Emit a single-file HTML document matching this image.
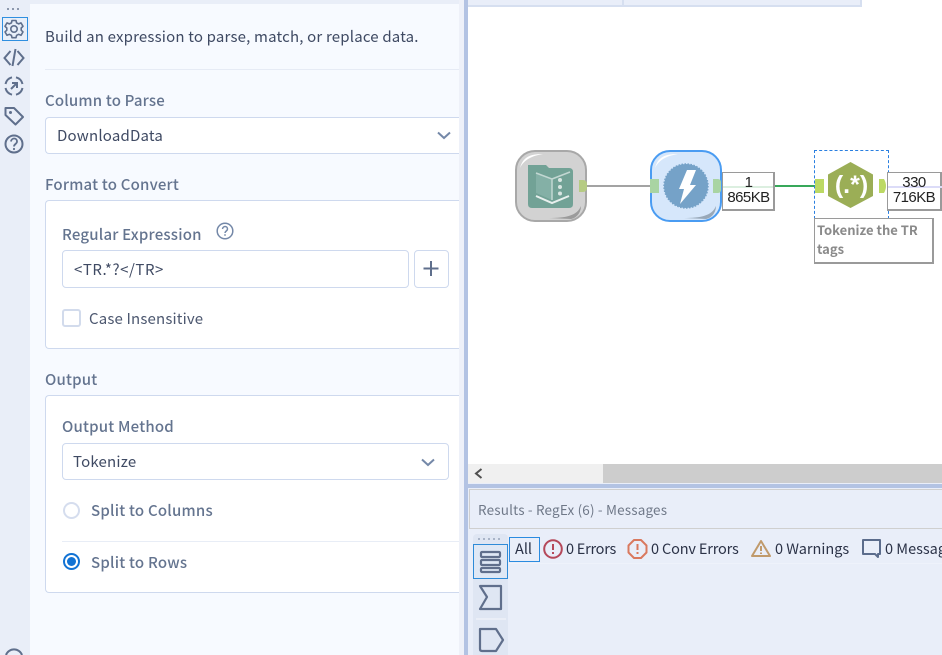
<!DOCTYPE html>
<html>
<head>
<meta charset="utf-8">
<style>
html,body{margin:0;padding:0;width:942px;height:655px;overflow:hidden;background:#fff}
body{position:relative;font-family:"Noto Sans CJK JP","Liberation Sans",sans-serif;}
.a{position:absolute;box-sizing:border-box}
.t{position:absolute;white-space:nowrap;line-height:20px;font-size:15px;color:#3f4a63}
.l{color:#64748f;font-weight:500}
.box{position:absolute;box-sizing:border-box;background:#fff;border:1px solid #ced9ee;border-radius:4px}
.m{position:absolute;white-space:nowrap;font-family:"Liberation Sans",sans-serif;font-size:15px;letter-spacing:-.55px;line-height:16px;color:#222;}
.n{position:absolute;white-space:nowrap;font-size:14.5px;line-height:18px;color:#2b3247;}
svg{position:absolute;overflow:visible}
</style>
</head>
<body>
<!-- left rail / panel -->
<div class="a" style="left:0;top:0;width:463px;height:655px;background:#f7faff"></div>
<div class="a" style="left:0;top:0;width:30px;height:655px;background:#e9eef8"></div>
<div class="a" style="left:0;top:0;width:463px;height:4px;background:#e9eef8"></div>
<div class="a" style="left:459px;top:0;width:5px;height:655px;background:#eef1f9"></div>
<div class="a" style="left:464px;top:0;width:4px;height:655px;background:#b3c3e3"></div>

<!-- rail dots -->
<svg style="left:0;top:0" width="30" height="14"><g fill="#8d98ad"><rect x="7" y="8" width="2" height="2"/><rect x="12" y="8" width="2" height="2"/><rect x="17" y="8" width="2" height="2"/></g></svg>
<div class="a" style="left:2px;top:17px;width:26px;height:24px;border:1px solid #2f8fe0;background:#e8eff9"></div>
<svg style="left:0;top:0" width="30" height="160" fill="none" stroke="#5f6f8c" stroke-width="2">
<g transform="translate(14,29)"><circle r="3.2" stroke-width="1.6"/><path stroke-width="1.6" stroke-linejoin="round" d="M-2-8.5h4l.6 2.4 2.1 1 2.3-1 2 3.4-1.8 1.7v2.2l1.8 1.7-2 3.4-2.3-1-2.1 1-.6 2.400h-4l-.6-2.400-2.100-1-2.300 1-2-3.400 1.800-1.700v-2.200l-1.800-1.700 2-3.400 2.300 1 2.100-1z"/></g>
<path d="M10.500 51 L4.500 58 L10.500 65 M17.500 51 L23.500 58 L17.500 65 M15.500 49 L12.500 66"/>
<g transform="translate(14,86)"><path d="M-8.500-2A9 9 0 0 1-2-8.700M2-8.700A9 9 0 0 1 8.500-2M8.500 2A9 9 0 0 1 2 8.700M-2 8.700A9 9 0 0 1-8.500 2"/><path d="M-3 3L3-3M-2-3H3V2"/></g>
<path stroke-linejoin="round" d="M5.500 108h8.500l9 9-7.500 7.500-10-9.500z"/><circle cx="10.500" cy="112.500" r="1.500" fill="#5f6f8c" stroke="none"/>
<circle cx="14" cy="144" r="8.500"/><path stroke-width="1.800" d="M11 141.500c.5-4 6-4 6 0 0 2.500-3 2.500-3 5"/><circle cx="14" cy="149" r="1.100" fill="#5f6f8c" stroke="none"/>
<path d="M6 655A8.500 8.500 0 0 1 22 655"/>
</svg>

<!-- panel content -->
<div class="t" style="left:45px;top:27px;letter-spacing:.18px">Build an expression to parse, match, or replace data.</div>
<div class="a" style="left:45px;top:69px;width:414px;height:1px;background:#e6ebf5"></div>

<div class="t l" style="left:45px;top:91px;letter-spacing:.18px">Column to Parse</div>
<div class="box" style="left:45px;top:117px;width:414px;height:37px;border-right:none;border-radius:4px 0 0 4px"></div>
<div class="t" style="left:57px;top:126px;letter-spacing:.2px">DownloadData</div>
<svg style="left:437px;top:131px" width="14" height="9" fill="none" stroke="#7488a8" stroke-width="2"><path d="M1 1.500L7 7l6-5.500"/></svg>

<div class="t l" style="left:45px;top:175px;letter-spacing:.2px">Format to Convert</div>
<div class="box" style="left:45px;top:200px;width:414px;height:149px;border-right:none;border-radius:4px 0 0 4px"></div>
<div class="t l" style="left:62px;top:225px;letter-spacing:.2px">Regular Expression</div>
<svg style="left:216px;top:222px" width="18" height="18" fill="none" stroke="#7488a8" stroke-width="1.500"><circle cx="9" cy="9" r="7.800"/><path d="M6.500 7c.3-3.300 5-3.300 5 0 0 2-2.500 2-2.500 4"/><circle cx="9" cy="13" r=".9" fill="#7488a8" stroke="none"/></svg>
<div class="box" style="left:62px;top:250px;width:347px;height:38px"></div>
<div class="t" style="left:74px;top:260px;letter-spacing:.55px">&lt;TR.*?&lt;/TR&gt;</div>
<div class="box" style="left:414px;top:250px;width:35px;height:38px"></div>
<svg style="left:423px;top:260px" width="18" height="18" stroke="#5f6f8c" stroke-width="2"><path d="M8 1v15M.5 8.500h15"/></svg>
<div class="a" style="left:62px;top:309px;width:19px;height:18px;border:2px solid #d2dbec;border-radius:3px;background:#fff"></div>
<div class="t" style="left:89px;top:309px;letter-spacing:.16px;color:#4d5870">Case Insensitive</div>

<div class="t l" style="left:45px;top:370px;letter-spacing:.2px">Output</div>
<div class="box" style="left:45px;top:395px;width:414px;height:198px;border-right:none;border-radius:4px 0 0 4px"></div>
<div class="t l" style="left:62px;top:417px;letter-spacing:.2px">Output Method</div>
<div class="box" style="left:62px;top:443px;width:387px;height:37px"></div>
<div class="t" style="left:73px;top:452px;letter-spacing:.2px">Tokenize</div>
<svg style="left:421px;top:458px" width="14" height="9" fill="none" stroke="#7488a8" stroke-width="2"><path d="M1 1.500L7 7l6-5.500"/></svg>
<div class="a" style="left:63px;top:502px;width:17px;height:17px;border:2px solid #d5ddee;border-radius:50%;background:#fff"></div>
<div class="t l" style="left:91px;top:501px;letter-spacing:.22px">Split to Columns</div>
<div class="a" style="left:62px;top:541px;width:397px;height:1px;background:#e8edf6"></div>
<div class="a" style="left:63px;top:553px;width:17px;height:17px;border:2px solid #1273d4;border-radius:50%;background:#fff"></div>
<div class="a" style="left:67px;top:557px;width:9px;height:9px;border-radius:50%;background:#1273d4"></div>
<div class="t l" style="left:91px;top:553px;letter-spacing:.22px">Split to Rows</div>

<!-- canvas top bar -->
<div class="a" style="left:468px;top:0;width:394px;height:7px;background:#e9eef9;border-bottom:2px solid #d6dff0;border-right:2px solid #d6dff0"></div>
<div class="a" style="left:622px;top:0;width:2px;height:6px;background:#d6dff0"></div>

<!-- connections -->
<svg style="left:0;top:0" width="942" height="300">
<path d="M587 186H651" stroke="#a3a3a3" stroke-width="2"/>
<path d="M722 186H772" stroke="#dcefe0" stroke-width="2"/>
<path d="M775 186H816" stroke="#38a85a" stroke-width="2"/>
<path d="M887 186H937" stroke="#d8d8f5" stroke-width="2"/>
<path d="M937 186H942" stroke="#4a4ad0" stroke-width="2"/>
</svg>

<!-- input tool -->
<div class="a" style="left:515px;top:150px;width:72px;height:72px;border-radius:20px;background:#d2d2d2;border:2px solid #a8a8a8"></div>
<svg style="left:515px;top:150px" width="72" height="72">
<path d="M5 18C8 7 15 4 28 4 16 6 9 10 5 18z" fill="#fff"/>
<path d="M34 68C50 68 62 66 66 56 66 62 62 68 56 69z" fill="#9b9b9b"/>
<path d="M13 19V15H31L34 18H54Q58 18 58 22V54Q58 58 54 58H17Q13 58 13 54z" fill="#72a296"/>
<path d="M21 23L37 29V50L21 43z" fill="#84b0a6"/>
<path d="M21 23L37 29V50M37 29L55 22" fill="none" stroke="#c2d7d2" stroke-width="1.500"/>
<path d="M21 46L37 53 54 46" fill="none" stroke="#e8f0ee" stroke-width="2"/>
<circle cx="45" cy="30" r="2" fill="#d8e6e2"/><circle cx="45" cy="37" r="2" fill="#d8e6e2"/><circle cx="45" cy="43.500" r="2" fill="#d8e6e2"/>
</svg>
<div class="a" style="left:579px;top:180px;width:8px;height:12px;background:#b6cb83;border-radius:0 4px 4px 0"></div>

<!-- download tool -->
<div class="a" style="left:650px;top:150px;width:72px;height:72px;border-radius:20px;background:#d6e7fb;border:2px solid #4a9cf2"></div>
<svg style="left:650px;top:150px" width="72" height="72">
<path d="M5 18C8 7 15 4 28 4 16 6 9 10 5 18z" fill="#fff"/>
<path d="M34 68C50 68 62 66 66 56 66 62 62 68 56 69z" fill="#98a8b8"/>
<circle cx="36" cy="36" r="22" fill="#75a2c8" stroke="#75a2c8" stroke-width="1.500" stroke-dasharray="1.500 1.500"/>
<path d="M37 20H46L40 35H46L30 54 34 39H29z" fill="#fff"/>
</svg>
<div class="a" style="left:650px;top:179px;width:9px;height:14px;background:#a9d4a3"></div>
<div class="a" style="left:713px;top:179px;width:8px;height:14px;background:#a9d4a3;border-radius:0 3px 3px 0"></div>

<!-- browse label 1 -->
<div class="a" style="left:722px;top:172px;width:53px;height:39px;background:#fff;border:1px solid #9a9a9a;border-width:1px 2px 2px 1px"></div>
<div class="a" style="left:723px;top:186px;width:50px;height:2px;background:#dcefe0"></div>
<div class="m" style="left:722px;width:53px;text-align:center;top:175px">1</div>
<div class="m" style="left:722px;width:53px;text-align:center;top:190px">865KB</div>

<!-- regex tool -->
<div class="a" style="left:814px;top:150px;width:75px;height:69px;border:1px dashed #2a7fe0;border-bottom:none"></div>
<svg style="left:814px;top:150px" width="76" height="70">
<path d="M36.500 12L59 24.500V46L36.500 58 14 46V24.500z" fill="#9bae56"/>
<path d="M1 29H10V43H1z" fill="#bcd964"/>
<path d="M65 29H70Q74 36 70 43H65z" fill="#bcd964"/>
</svg>
<div class="a" style="left:820px;top:170px;width:63px;text-align:center;font:700 25px/30px 'Liberation Sans',sans-serif;color:#fff">(.*)</div>

<!-- browse label 2 -->
<div class="a" style="left:887px;top:172px;width:55px;height:39px;background:#fff;border:1px solid #9a9a9a;border-width:1px 2px 2px 1px"></div>
<div class="a" style="left:888px;top:186px;width:54px;height:2px;background:#dcdcf8"></div>
<div class="m" style="left:887px;width:54px;text-align:center;top:175px">330</div>
<div class="m" style="left:887px;width:54px;text-align:center;top:190px">716KB</div>

<!-- annotation -->
<div class="a" style="left:814px;top:218px;width:120px;height:46px;background:#fff;border:1px solid #9a9a9a;border-width:1px 2px 2px 1px"></div>
<div class="a" style="left:817px;top:220px;font:700 13px/19px 'Noto Sans CJK JP','Liberation Sans',sans-serif;color:#8a8a8a;width:112px">Tokenize the TR<br>tags</div>

<!-- scrollbar -->
<div class="a" style="left:468px;top:464px;width:474px;height:19px;background:#f0f0f0"></div>
<div class="a" style="left:603px;top:464px;width:339px;height:19px;background:#cdcdcd"></div>
<svg style="left:474px;top:468px" width="10" height="11" fill="none" stroke="#505050" stroke-width="2"><path d="M7.500 1L2 5.500 7.500 10"/></svg>

<!-- results panel -->
<div class="a" style="left:468px;top:483px;width:474px;height:172px;background:#e9eef9"></div>
<div class="a" style="left:468px;top:484px;width:474px;height:4px;background:#b3c3e3"></div>
<div class="a" style="left:469px;top:489px;width:473px;height:40px;background:#e9eef9;border:1px solid #cfcfcf;border-right:none"></div>
<div class="t" style="left:478px;top:499px;font-size:13.500px;color:#6f7888;letter-spacing:.17px">Results - RegEx (6) - Messages</div>

<!-- side toolbar -->
<div class="a" style="left:473px;top:534px;width:35px;height:121px;background:#dfe6f3;border-radius:4px 4px 0 0"></div>
<svg style="left:473px;top:534px" width="35" height="10" fill="#a9b4c8"><rect x="5" y="4" width="2" height="2"/><rect x="10" y="4" width="2" height="2"/><rect x="15" y="4" width="2" height="2"/><rect x="20" y="4" width="2" height="2"/><rect x="25" y="4" width="2" height="2"/></svg>
<div class="a" style="left:473px;top:544px;width:35px;height:35px;border:1px solid #2e8bd8;background:#dfe8f5"></div>
<svg style="left:473px;top:544px" width="35" height="111" fill="none" stroke="#606f8c" stroke-width="2.200" stroke-linejoin="round">
<rect x="8" y="8" width="19" height="5" rx="1"/><rect x="8" y="16" width="19" height="5" rx="1"/><rect x="8" y="24" width="19" height="4" rx="1"/>
<path d="M7 42H28V65H7L14 53z"/>
<path d="M3 75H33" stroke="#f4f6fb" stroke-width="1"/>
<path d="M7 85H23L30 96 23 107H9Q7 107 7 105z"/>
</svg>

<!-- message bar -->
<div class="a" style="left:508px;top:563px;width:434px;height:1px;background:#eef2fb"></div>
<div class="a" style="left:509px;top:537px;width:31px;height:25px;border:1px solid #2a8be0"></div>
<div class="n" style="left:515px;top:540px">All</div>
<div class="n" style="left:566px;top:540px;letter-spacing:-.25px">0 Errors</div>
<div class="n" style="left:651px;top:540px;letter-spacing:-.16px">0 Conv Errors</div>
<div class="n" style="left:775px;top:540px">0 Warnings</div>
<div class="n" style="left:885px;top:540px">0 Messages</div>
<svg style="left:0;top:0" width="942" height="655" fill="none" stroke-width="2">
<g stroke="#b5485a"><circle cx="553" cy="549" r="8.800"/><path d="M553 544v6M553 552v2"/></g>
<g stroke="#d9795f" stroke-linejoin="round"><path d="M634 540h7l5.500 5.500v7L641 558h-7l-5.500-5.500v-7z"/><path d="M637.500 544v6M637.500 552v2"/></g>
<path d="M761 541l9 15h-18z" stroke="#c09a6c" stroke-linejoin="round"/><path d="M761 546v5M761 552.500v1.500" stroke="#c09a6c"/>
<path d="M863 540h17v14h-2v3l-3-3h-12z" stroke="#5b6c8c" stroke-linejoin="round"/>
</svg>
</body>
</html>
